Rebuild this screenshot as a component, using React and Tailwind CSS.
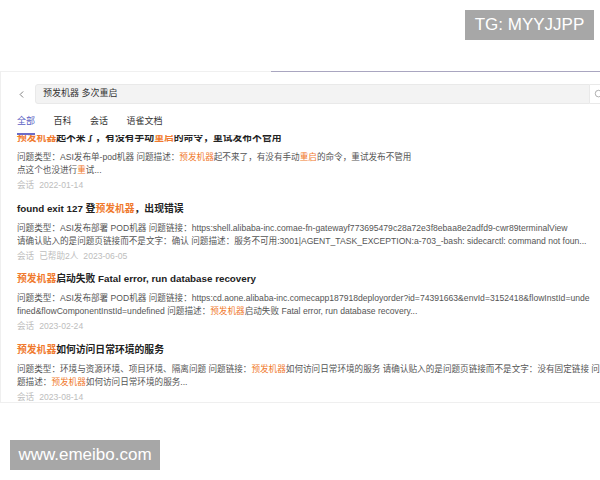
import React from "react";
import { ChevronLeft, Search } from "lucide-react";

const results = [
  {
    title: "[[预发机器]]起不来了，有没有手动[[重启]]的命令，重试发布不管用",
    lines: [
      "问题类型：ASI发布单-pod机器 问题描述：[[预发机器]]起不来了，有没有手动[[重启]]的命令，重试发布不管用",
      "点这个也没进行[[重]]试...",
    ],
    meta: ["会话", "2022-01-14"],
  },
  {
    title: "found exit 127 登[[预发机器]]，出现错误",
    lines: [
      "问题类型：ASI发布部署 POD机器 问题链接：https:shell.alibaba-inc.comae-fn-gatewayf773695479c28a72e3f8ebaa8e2adfd9-cwr89terminalView",
      "请确认贴入的是问题页链接而不是文字：确认 问题描述：服务不可用:3001|AGENT_TASK_EXCEPTION:a-703_-bash: sidecarctl: command not foun...",
    ],
    meta: ["会话", "已帮助2人", "2023-06-05"],
  },
  {
    title: "[[预发机器]]启动失败 Fatal error, run database recovery",
    lines: [
      "问题类型：ASI发布部署 POD机器 问题链接：https:cd.aone.alibaba-inc.comecapp187918deployorder?id=74391663&envId=3152418&flowInstId=unde",
      "fined&flowComponentInstId=undefined 问题描述：[[预发机器]]启动失败 Fatal error, run database recovery...",
    ],
    meta: ["会话", "2023-02-24"],
  },
  {
    title: "[[预发机器]]如何访问日常环境的服务",
    lines: [
      "问题类型：环境与资源环境、项目环境、隔离问题 问题链接：[[预发机器]]如何访问日常环境的服务 请确认贴入的是问题页链接而不是文字：没有固定链接 问",
      "题描述：[[预发机器]]如何访问日常环境的服务...",
    ],
    meta: ["会话", "2023-08-14"],
  },
];

const tabs = ["全部", "百科", "会话", "语雀文档"];

// split "[[word]]" markers into orange highlights
const Marked = ({ text }) =>
  text.split(/\[\[(.+?)\]\]/).map((part, i) =>
    i % 2 === 1 ? (
      <span key={i} className="text-[#f07a2e]">
        {part}
      </span>
    ) : (
      <span key={i}>{part}</span>
    )
  );

const App = () => {
  return (
    <div
      className="w-[600px] h-[480px] overflow-hidden bg-white flex flex-col"
      style={{ fontFamily: '"Liberation Sans", "Noto Sans CJK SC", sans-serif' }}
    >
      {/* top watermark */}
      <div className="h-[71px] flex justify-end items-start pt-[10px] pr-[6px]">
        <div className="w-[129px] h-[30px] bg-[#a7a7a7] text-white text-[17px] flex items-center justify-center">
          TG: MYYJJPP
        </div>
      </div>

      {/* search panel */}
      <div className="w-[614px] h-[332px] flex flex-col bg-white border-l border-b border-[#efefef] overflow-hidden">
        <div className="flex h-px">
          <div className="w-[270px] bg-[#f0f0f0]"></div>
          <div className="flex-1 bg-[#a9a6c0]"></div>
        </div>

        <div className="flex items-center mt-[12px] h-[20px] pl-[15px]">
          <div className="w-[19px] flex items-center text-[#555]">
            <ChevronLeft size={11} strokeWidth={1.6} />
          </div>
          <div className="w-[555px] h-[20px] bg-[#f3f3f3] border border-[#e9e9e9] rounded-l-[3px] flex items-center pl-[7px] text-[9px] text-[#333]">
            预发机器 多次重启
          </div>
          <div className="w-[22px] h-[20px] border border-[#e9e9e9] border-l-0 bg-white flex items-center pl-[4px] text-[#888]">
            <Search size={10} strokeWidth={1.6} />
          </div>
        </div>

        <div className="flex gap-[18.5px] pl-[16px] mt-[10px]">
          {tabs.map((t, i) => (
            <div
              key={t}
              className={`text-[9px] leading-[14px] pb-[5px] border-b-2 ${
                i === 0
                  ? "text-[#5b5fc4] border-[#6a6cc8]"
                  : "text-[#333] border-transparent"
              }`}
            >
              {t}
            </div>
          ))}
        </div>

        <div className="flex-1 overflow-hidden">
          <div className="-mt-[5px] pl-[16px] pr-[14px]">
            {results.map((r, idx) => (
              <div key={idx} className="pb-[8.5px]">
                <div className="text-[9.8px] leading-[16px] font-bold text-[#222] whitespace-nowrap">
                  <Marked text={r.title} />
                </div>
                <div className="mt-[5px] text-[8.6px] leading-[13px] text-[#555]">
                  {r.lines.map((l, j) => (
                    <div key={j} className="whitespace-nowrap overflow-hidden">
                      <Marked text={l} />
                    </div>
                  ))}
                </div>
                <div className="mt-[1px] flex gap-[5px] text-[8.6px] leading-[14px] text-[#bdbdbd]">
                  {r.meta.map((m) => (
                    <span key={m}>{m}</span>
                  ))}
                </div>
              </div>
            ))}
          </div>
        </div>
      </div>

      {/* bottom watermark */}
      <div className="mt-[37px] pl-[10px]">
        <div className="w-[150px] h-[30px] bg-[#a7a7a7] text-white text-[17px] flex items-center justify-center">
          www.emeibo.com
        </div>
      </div>
    </div>
  );
};

export default App;
